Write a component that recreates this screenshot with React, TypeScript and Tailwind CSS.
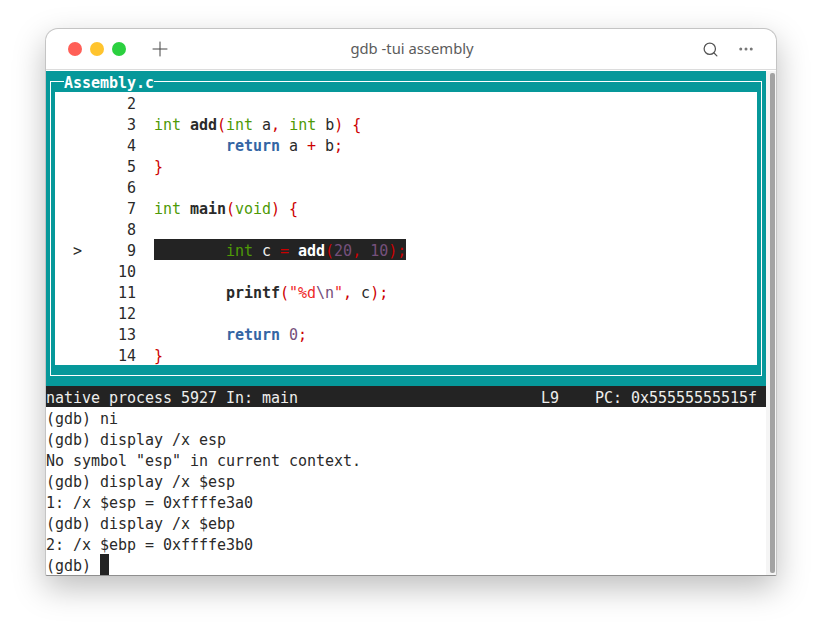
import { Search, MoreHorizontal, Plus } from "lucide-react";
import type { ReactNode } from "react";

const green = "text-[#4e9a06]";
const red = "text-[#cc0000]";
const purple = "text-[#75507b]";
const blue = "font-bold text-[#3465a4]";
const strong = "font-bold";

function S({ c, children }: { c: string; children: ReactNode }) {
  return <span className={c}>{children}</span>;
}

const sourceLines: { n: string; code?: ReactNode }[] = [
  { n: "2" },
  {
    n: "3",
    code: (
      <>
        <S c={green}>int</S> <S c={strong}>add</S>
        <S c={red}>(</S>
        <S c={green}>int</S> a<S c={red}>,</S> <S c={green}>int</S> b<S c={red}>)</S> <S c={red}>{"{"}</S>
      </>
    ),
  },
  {
    n: "4",
    code: (
      <>
        {"        "}
        <S c={blue}>return</S> a <S c={red}>+</S> b<S c={red}>;</S>
      </>
    ),
  },
  { n: "5", code: <S c={red}>{"}"}</S> },
  { n: "6" },
  {
    n: "7",
    code: (
      <>
        <S c={green}>int</S> <S c={strong}>main</S>
        <S c={red}>(</S>
        <S c={green}>void</S>
        <S c={red}>)</S> <S c={red}>{"{"}</S>
      </>
    ),
  },
  { n: "8" },
  { n: "9" },
  { n: "10" },
  {
    n: "11",
    code: (
      <>
        {"        "}
        <S c={strong}>printf</S>
        <S c={red}>(</S>
        <S c="text-[#ef2929]">"%d</S>
        <S c={purple}>\n</S>
        <S c="text-[#ef2929]">"</S>
        <S c={red}>,</S> c<S c={red}>);</S>
      </>
    ),
  },
  { n: "12" },
  {
    n: "13",
    code: (
      <>
        {"        "}
        <S c={blue}>return</S> <S c={purple}>0</S>
        <S c={red}>;</S>
      </>
    ),
  },
  { n: "14", code: <S c={red}>{"}"}</S> },
];

const consoleLines = [
  "(gdb) ni",
  "(gdb) display /x esp",
  'No symbol "esp" in current context.',
  "(gdb) display /x $esp",
  "1: /x $esp = 0xffffe3a0",
  "(gdb) display /x $ebp",
  "2: /x $ebp = 0xffffe3b0",
];

export default function App() {
  return (
    <div className="w-[822px] h-[637px] bg-white pt-[28px] pl-[45px] overflow-hidden">
      <div className="w-[732px] h-[548px] flex flex-col bg-white rounded-t-[13px] rounded-b-[2px] border border-[#c4c4c4] border-b-[#8f8f8f] shadow-[0_12px_32px_rgba(0,0,0,0.26)] overflow-hidden">
        {/* title bar */}
        <div className="h-[41px] shrink-0 flex items-center border-b border-[#dcdcdc] pl-[22px] pr-[21px]">
          <div className="flex items-center gap-[8px]">
            <span className="w-[14px] h-[14px] rounded-full bg-[#ff5f57]" />
            <span className="w-[14px] h-[14px] rounded-full bg-[#ffc42e]" />
            <span className="w-[14px] h-[14px] rounded-full bg-[#2bd03f]" />
          </div>
          <Plus size={24} strokeWidth={1} className="ml-[22px] text-[#444]" />
          <div className="flex-1 text-center font-['Noto_Sans',sans-serif] text-[14.8px] text-[#5c5c5c] ml-[-50px] mb-[2px]">gdb -tui assembly</div>
          <Search size={17} strokeWidth={1.8} className="text-[#555] mr-[18px]" />
          <MoreHorizontal size={18} strokeWidth={2} className="text-[#777]" />
        </div>

        {/* terminal */}
        <div className="flex-1 flex pt-px font-['DejaVu_Sans_Mono',monospace] text-[15px] leading-[24px] tracking-[-0.03px] text-[#2a2a2a] whitespace-pre">
          <div className="w-[720px] shrink-0 flex flex-col">
            <div className="h-[315px] bg-[#06989a] pt-[10px] px-[4px]">
              <div className="relative h-[295px] border border-white p-[10px] pl-[4px] pr-[4px]">
                <span className="absolute left-[13px] top-[-11px] h-[21px] bg-[#06989a] font-bold text-white">Assembly.c</span>
                <div className="bg-white h-[273px]">
                  {sourceLines.map((line) => (
                    <div key={line.n} className="flex h-[21px]">
                      <span className="ml-[18px] w-[9px] shrink-0">{line.n === "9" ? ">" : ""}</span>
                      <span className="w-[36px] shrink-0" />
                      <span className="w-[18px] shrink-0 text-right">{line.n}</span>
                      <span className="w-[18px] shrink-0" />
                      {line.n === "9" ? (
                        <span className="w-[252px] bg-[#232323] text-[#eeeeec]">
                          {"        "}
                          <S c={green}>int</S> c <S c={red}>=</S> <S c="font-bold text-white">add</S>
                          <S c={red}>(</S>
                          <S c={purple}>20</S>
                          <S c={red}>,</S> <S c={purple}>10</S>
                          <S c={red}>);</S>
                        </span>
                      ) : (
                        <span>{line.code}</span>
                      )}
                    </div>
                  ))}
                </div>
              </div>
            </div>

            <div className="h-[21px] bg-[#232323] text-[#eeeeec] flex">
              <span className="w-[495px]">native process 5927 In: main</span>
              <span className="w-[54px]">L9</span>
              <span>PC: 0x55555555515f</span>
            </div>

            {consoleLines.map((line) => (
              <div key={line} className="h-[21px]">
                {line}
              </div>
            ))}
            <div className="h-[21px] flex">
              <span>(gdb) </span>
              <span className="w-[9px] h-[21px] bg-[#232323]" />
            </div>
          </div>

          {/* scrollbar */}
          <div className="flex-1 bg-[#f5f5f5] pt-[2px] pb-[2px] pl-[4px] pr-[1px]">
            <div className="h-[500px] bg-[#a3a3a3] rounded-[2px]" />
          </div>
        </div>
      </div>
    </div>
  );
}
